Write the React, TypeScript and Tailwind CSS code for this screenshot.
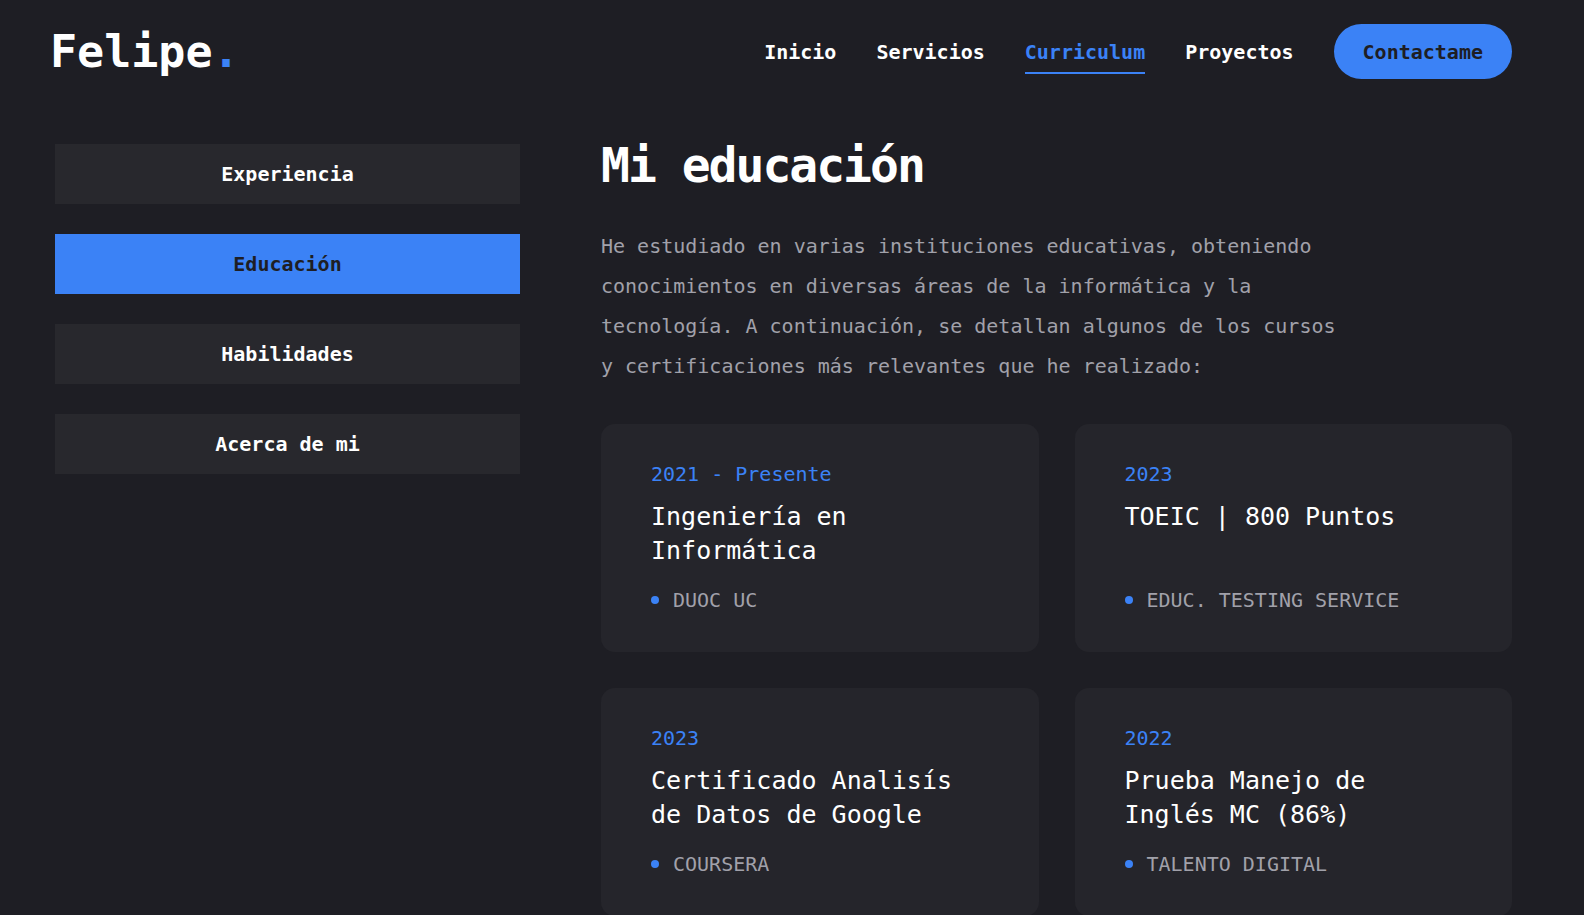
const font = "font-['DejaVu_Sans_Mono','Liberation_Mono',monospace]";

const navLinks = ['Inicio', 'Servicios', 'Curriculum', 'Proyectos'];
const tabs = ['Experiencia', 'Educación', 'Habilidades', 'Acerca de mi'];

const education = [
  { period: '2021 - Presente', title: 'Ingeniería en Informática', place: 'Duoc UC' },
  { period: '2023', title: 'TOEIC | 800 Puntos', place: 'Educ. Testing Service' },
  { period: '2023', title: 'Certificado Analisís de Datos de Google', place: 'Coursera' },
  { period: '2022', title: 'Prueba Manejo de Inglés MC (86%)', place: 'Talento Digital' },
];

function Header() {
  return (
    <header className="flex items-center justify-between pl-[50px] pr-[72px] pt-6">
      <div className="text-[45px] leading-[54px] font-bold text-white">
        Felipe<span className="text-[#3b82f6]">.</span>
      </div>
      <nav className="flex items-center gap-10 text-xl leading-7 font-bold">
        {navLinks.map((link) => (
          <a
            key={link}
            href="#"
            className={`relative ${link === 'Curriculum' ? 'text-[#3b82f6]' : 'text-white'}`}
          >
            {link}
            {link === 'Curriculum' && (
              <span className="absolute left-0 right-0 -bottom-[8px] h-[2px] bg-[#3b82f6]" />
            )}
          </a>
        ))}
        <button className="h-[55px] rounded-full bg-[#3b82f6] px-[29px] text-xl text-[#1e1e24]">
          Contactame
        </button>
      </nav>
    </header>
  );
}

function Sidebar() {
  return (
    <div className="flex flex-col gap-[30px]">
      {tabs.map((tab) => (
        <button
          key={tab}
          className={`h-[60px] w-full text-xl font-bold ${
            tab === 'Educación' ? 'bg-[#3b82f6] text-[#1e1e24]' : 'bg-[#28282d] text-white'
          }`}
        >
          {tab}
        </button>
      ))}
    </div>
  );
}

function EducationCard({ period, title, place }: { period: string; title: string; place: string }) {
  return (
    <div className="rounded-[14px] bg-[#25252b] px-[50px] pt-[36px] pb-[38px]">
      <p className="text-xl leading-7 text-[#3b82f6]">{period}</p>
      <h3 className="mt-3 min-h-[68px] text-[25px] leading-[34px] text-white">{title}</h3>
      <div className="mt-[18px] flex items-center gap-[14px] text-xl leading-7 uppercase text-[#a1a1aa]">
        <span className="h-2 w-2 rounded-full bg-[#3b82f6]" />
        {place}
      </div>
    </div>
  );
}

export default function App() {
  return (
    <div className={`min-h-screen bg-[#1e1e24] ${font}`}>
      <Header />
      <main className="mt-[65px] grid grid-cols-[465px_1fr] gap-x-[81px] pl-[55px] pr-[72px] pb-10">
        <Sidebar />
        <section>
          <h1 className="text-[48px] leading-[42px] font-bold tracking-[-2px] text-white">
            Mi educación
          </h1>
          <p className="mt-10 max-w-[740px] text-xl leading-[40px] text-[#a1a1aa]">
            He estudiado en varias instituciones educativas, obteniendo conocimientos en diversas
            áreas de la informática y la tecnología. A continuación, se detallan algunos de los
            cursos y certificaciones más relevantes que he realizado:
          </p>
          <div className="mt-[38px] grid grid-cols-2 gap-9">
            {education.map((item) => (
              <EducationCard key={item.title} {...item} />
            ))}
          </div>
        </section>
      </main>
    </div>
  );
}
